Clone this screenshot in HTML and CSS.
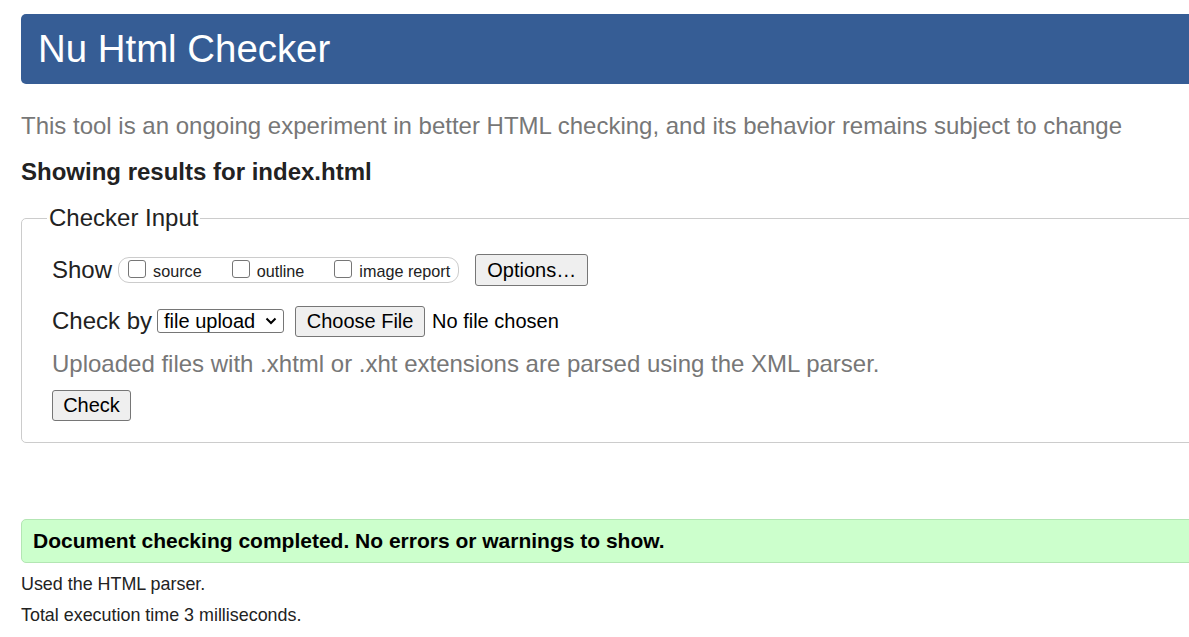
FILE: index.html
```html
<!DOCTYPE html>
<html lang="en">
<head>
<meta charset="utf-8">
<title>Nu Html Checker</title>
<link rel="stylesheet" href="styles.css">
</head>
<body>
<div class="page">
  <header class="banner"><h1 class="title">Nu Html Checker</h1></header>
  <p class="intro">This tool is an ongoing experiment in better HTML checking, and its behavior remains subject to change</p>
  <p class="showing">Showing results for index.html</p>
  <fieldset class="input-box">
    <legend class="legend">Checker Input</legend>
    <div class="row show-row">
      <span class="row-label">Show</span>
      <span class="pill">
        <label class="opt"><input type="checkbox" class="cb">source</label>
        <label class="opt"><input type="checkbox" class="cb">outline</label>
        <label class="opt"><input type="checkbox" class="cb">image report</label>
      </span>
      <button class="btn btn-options">Options…</button>
    </div>
    <div class="row check-row">
      <span class="row-label">Check by</span>
      <span class="select">file upload
        <svg class="chev" width="12" height="8" viewBox="0 0 12 8"><path d="M1.5 1.5 L6 6 L10.5 1.5" fill="none" stroke="#000" stroke-width="2"/></svg>
      </span>
      <button class="btn btn-file">Choose File</button>
      <span class="nofile">No file chosen</span>
    </div>
    <p class="hint">Uploaded files with .xhtml or .xht extensions are parsed using the XML parser.</p>
    <button class="btn btn-check">Check</button>
  </fieldset>
  <div class="success">Document checking completed. No errors or warnings to show.</div>
  <p class="meta">Used the HTML parser.</p>
  <p class="meta">Total execution time 3 milliseconds.</p>
</div>
</body>
</html>
```
FILE: styles.css
```css
html, body {
  margin: 0;
  padding: 0;
  overflow: hidden;
  background: #fff;
}
body {
  font-family: "Liberation Sans", Arial, sans-serif;
  color: #222;
}
.page {
  width: 1240px;
  padding: 14px 0 0 21px;
}
.banner {
  background: #365d95;
  height: 70px;
  border-radius: 5px;
  display: flex;
  align-items: center;
  padding-left: 17px;
}
.title {
  margin: 0;
  color: #fff;
  font-weight: normal;
  font-size: 38.4px;
  line-height: 1;
}
.intro {
  margin: 28px 0 0;
  font-size: 24px;
  line-height: 28px;
  color: #777;
}
.showing {
  margin: 18px 0 0;
  font-size: 24px;
  line-height: 28px;
  font-weight: bold;
  color: #222;
}
.input-box {
  margin: 18px 0 0;
  border: 1px solid #ccc;
  border-radius: 5px;
  padding: 8px 30px 21px 30px;
  box-sizing: border-box;
  min-width: 0;
}
.legend {
  font-size: 24px;
  line-height: 28px;
  padding: 0 2px;
  margin-left: -5px;
  color: #222;
}
.row {
  display: flex;
  align-items: center;
}
.row-label {
  font-size: 24px;
  color: #222;
}
.show-row {
  height: 34px;
  margin-top: 13px;
}
.pill {
  display: flex;
  align-items: center;
  height: 26px;
  box-sizing: border-box;
  margin-left: 6px;
  border: 1px solid #ccc;
  border-radius: 11px;
  padding: 0 8px 0 9px;
  gap: 30px;
}
.opt {
  display: flex;
  align-items: center;
  font-size: 16.2px;
  color: #222;
  padding-top: 2px;
}
.cb {
  appearance: none;
  -webkit-appearance: none;
  width: 18px;
  height: 18px;
  margin: -5px 7px 0 0;
  border: 1px solid #767676;
  border-radius: 3px;
  background: #fff;
  box-sizing: border-box;
}
.btn {
  font-family: "Liberation Sans", Arial, sans-serif;
  font-size: 20px;
  color: #000;
  background: #efefef;
  border: 1px solid #767676;
  border-radius: 3px;
  padding: 0 11px;
  box-sizing: border-box;
}
.btn-options {
  margin-left: 16px;
  height: 32px;
  width: 113px;
}
.check-row {
  margin-top: 18px;
  height: 32px;
}
.select {
  display: inline-flex;
  align-items: center;
  margin-left: 5px;
  height: 24px;
  width: 127px;
  box-sizing: border-box;
  border: 1px solid #767676;
  border-radius: 3px;
  padding: 0 6px 0 6px;
  font-size: 20px;
  color: #000;
  justify-content: space-between;
}
.chev {
  display: block;
}
.btn-file {
  margin-left: 11px;
  height: 31px;
  width: 130px;
  padding: 0;
}
.nofile {
  margin-left: 7px;
  font-size: 20px;
  color: #000;
}
.hint {
  margin: 13px 0 0;
  font-size: 24px;
  line-height: 28px;
  color: #777;
}
.btn-check {
  display: block;
  margin-top: 12px;
  width: 79px;
  height: 31px;
  padding: 0;
}
.success {
  margin-top: 76px;
  height: 44px;
  box-sizing: border-box;
  background: #ccffcc;
  border: 1px solid #b3e6b3;
  border-radius: 5px;
  padding-left: 11px;
  display: flex;
  align-items: center;
  font-size: 21px;
  font-weight: bold;
  color: #000;
}
.meta {
  margin: 11px 0 0;
  font-size: 17.9px;
  line-height: 20px;
  color: #222;
}
.meta + .meta {
  margin-top: 11px;
}
```
